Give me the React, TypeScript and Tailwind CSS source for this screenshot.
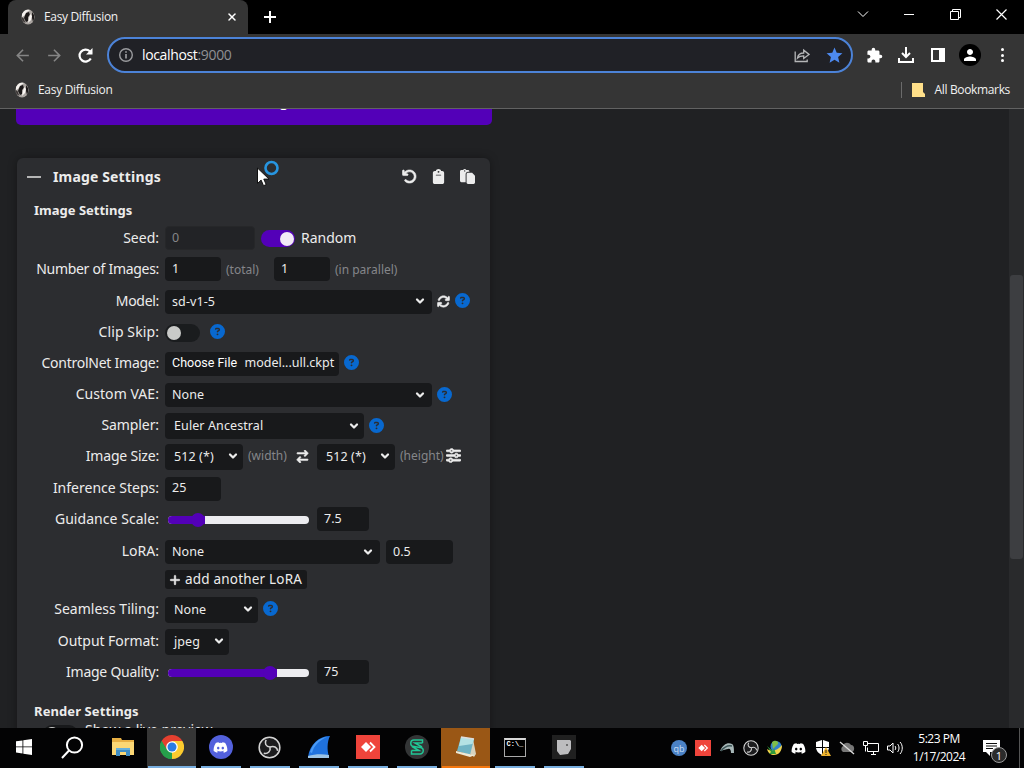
import type { ReactNode } from "react";
import {
  FaArrowRightArrowLeft,
  FaArrowRotateLeft,
  FaArrowsRotate,
  FaCircleQuestion,
  FaClipboard,
  FaDiscord,
  FaPaste,
  FaPlus,
  FaSliders,
} from "react-icons/fa6";
import { MdArrowBack, MdArrowForward, MdExtension, MdPerson, MdStar } from "react-icons/md";
import { ChevronDown, X } from "lucide-react";

function Favicon() {
  return (
    <svg width="16" height="16" viewBox="0 0 16 16">
      <ellipse cx="8" cy="8" rx="6.5" ry="7.500" fill="#aaa5a1" />
      <path d="M2 5C4 1 7 0 10 1l-3 2-3 4-2 1z" fill="#f4f1ee" />
      <path d="M6 4l3-1 1 3-2 2 0 4-2 1-2-4z" fill="#1b1818" />
      <path d="M10 5l2 2-1 4-3 3 1-5z" fill="#fbf8f4" />
      <path d="M1.500 8l2 1 2 5-3-2z" fill="#3b3635" />
      <path d="M12 3l2 3 0 4-1 3-1-4z" fill="#1d1a1a" />
    </svg>
  );
}

function TabStrip() {
  return (
    <div className="flex h-[34px] bg-black pl-2">
      <div className="flex w-60 items-center rounded-t-lg bg-[#353535] pl-3">
        <Favicon />
        <span className="ml-2 flex-1 text-xs tracking-[-0.35px] text-[#f1f1f1]">Easy Diffusion</span>
        <X size={12} strokeWidth={3} className="mr-2.5 text-white" />
      </div>
      <svg className="ml-4 mt-[11px]" width="12" height="12" viewBox="0 0 12 12">
        <path d="M6 0v12M0 6h12" stroke="#fff" strokeWidth="2" />
      </svg>
      <div className="ml-auto flex h-7 items-center text-white">
        <div className="flex w-[46px] justify-center">
          <svg width="12" height="12" viewBox="0 0 12 12" fill="none" stroke="currentColor">
            <path d="M1 3.5l5 5 5-5" />
          </svg>
        </div>
        <div className="flex w-[46px] justify-center">
          <div className="h-px w-2.5 bg-white" />
        </div>
        <div className="flex w-[46px] justify-center">
          <svg width="11" height="11" viewBox="0 0 11 11" fill="none" stroke="currentColor">
            <path d="M.5 2.5h8v8h-8zM2.5 2.5v-2h8v8h-2" />
          </svg>
        </div>
        <div className="flex w-[46px] justify-center">
          <svg width="11" height="11" viewBox="0 0 11 11" stroke="currentColor" strokeWidth="1.2">
            <path d="M.5.5l10 10M10.5.5l-10 10" />
          </svg>
        </div>
      </div>
    </div>
  );
}

function AddressBar() {
  return (
    <div className="flex h-[42px] items-center bg-[#353535] pl-[13px] text-white">
      <MdArrowBack size={19} className="text-[#858585]" />
      <MdArrowForward size={19} className="ml-[13px] text-[#858585]" />
      <svg className="ml-[13px] mr-0.5" width="17" height="17" viewBox="0 0 17 17" fill="none">
        <path d="M13.800 11.500A6 6 0 1 1 12.800 4.300L14.500 6" stroke="#fff" strokeWidth="2.200" />
        <path d="M15.500 1v6.500H9z" fill="#fff" />
      </svg>
      <div className="ml-[11px] flex h-9 w-[746px] items-center rounded-full border-2 border-[#4c83d8] bg-[#202126] pl-[9px]">
        <svg width="16" height="16" viewBox="0 0 16 16" fill="none" stroke="#9a9b9e" strokeWidth="1.4">
          <circle cx="8" cy="8" r="6.3" />
          <path d="M8 7v4.5M8 4.3v1.4" strokeWidth="1.7" />
        </svg>
        <span className="ml-2 flex-1 text-sm tracking-[-0.35px] text-white">
          localhost<span className="text-[#8f9094]">:9000</span>
        </span>
        <svg width="16" height="16" viewBox="0 0 16 16" fill="none" stroke="#b5b6b8" strokeWidth="1.3">
          <path d="M1.2 4.5v10h12v-2" />
          <path d="M3.5 11c.6-3.5 3-5 6.2-5V3.2L15 7.4l-5.300 4V8.800c-2.500 0-4.500.4-6.200 2.200z" />
        </svg>
        <MdStar size={19} className="ml-[15px] mr-[7px] text-[#4d8af0]" />
      </div>
      <MdExtension size={17} className="ml-[13px]" />
      <svg className="ml-[15px]" width="16" height="16" viewBox="0 0 16 16" fill="none" stroke="currentColor" strokeWidth="2">
        <path d="M8 0v9.500M4 6l4 4 4-4M1 11v4h14v-4" />
      </svg>
      <svg className="ml-[17px]" width="14" height="14" viewBox="0 0 14 14">
        <path d="M0 0h14v14H0zM2 2v10h6V2z" fill="#fff" fillRule="evenodd" />
      </svg>
      <div className="ml-3.5 flex size-[22px] items-center justify-center rounded-full bg-black">
        <MdPerson size={18} />
      </div>
      <div className="ml-5 flex flex-col gap-[2.500px]">
        <div className="size-[3px] rounded-full bg-white" />
        <div className="size-[3px] rounded-full bg-white" />
        <div className="size-[3px] rounded-full bg-white" />
      </div>
    </div>
  );
}

function BookmarksBar() {
  return (
    <div className="flex h-[33px] items-center border-b border-[#626262] bg-[#353535] pb-1 pl-3.5 text-xs tracking-[-0.3px] text-[#f1f1f1]">
      <Favicon />
      <span className="ml-2">Easy Diffusion</span>
      <div className="ml-auto h-4 w-px bg-[#6b6b6b]" />
      <svg className="ml-2.5" width="13" height="14" viewBox="0 0 13 14">
        <path d="M0 0h11v9l2 2v3H0z" fill="#ffe08a" />
      </svg>
      <span className="ml-2.5 mr-3.5 tracking-[-0.35px]">All Bookmarks</span>
    </div>
  );
}

function Help({ className = "ml-[5px]" }: { className?: string }) {
  return <FaCircleQuestion size={15} className={`mb-px shrink-0 text-[#0868cf] ${className}`} />;
}

function Row({
  label,
  height,
  tracking = "",
  children,
}: {
  label: string;
  height: string;
  tracking?: string;
  children: ReactNode;
}) {
  return (
    <div className={`flex items-center ${height}`}>
      <div className={`mr-1.5 w-[142px] shrink-0 whitespace-nowrap pb-px text-right text-sm ${tracking}`}>
        {label}
      </div>
      {children}
    </div>
  );
}

function Field({ value, className }: { value: string; className: string }) {
  return (
    <div
      className={`flex h-6 shrink-0 items-center rounded-[4px] bg-[#18191b] pl-[7px] text-[12.5px] ${className}`}
    >
      {value}
    </div>
  );
}

function Select({
  value,
  className,
}: {
  value: string;
  className: string;
}) {
  return (
    <div
      className={`mt-px flex shrink-0 items-center justify-between whitespace-nowrap rounded-[4px] bg-[#18191b] text-[12.5px] tracking-[0.1px] ${className}`}
    >
      <span className="pt-px">{value}</span>
      <ChevronDown size={12} strokeWidth={4.500} className="mb-px" />
    </div>
  );
}

function Slider({ fill }: { fill: string }) {
  return (
    <div className="ml-[3px] mt-px flex h-2 w-[141px] shrink-0 items-center rounded-full bg-[#ededf0]">
      <div className={`h-2 rounded-l-full bg-[#5300b8] ${fill}`} />
      <div className="-ml-3.5 size-3.5 rounded-full bg-[#5300b8]" />
    </div>
  );
}

function ImageSettings() {
  return (
    <div className="ml-[17px] mt-[33px] h-[640px] w-[473px] rounded-[6px] bg-[#2c2d30] text-[#ececec] shadow-[0_0_8px_rgba(0,0,0,0.35)]">
      <div className="flex h-[37px] items-center pl-2.5">
        <div className="h-0.5 w-3.5 bg-[#b5b5b5]" />
        <h4 className="ml-3 text-sm font-bold tracking-[0.15px]">Image Settings</h4>
        <FaArrowRotateLeft size={15} className="ml-auto stroke-current [stroke-width:20px]" />
        <FaClipboard size={15} className="ml-3.5" />
        <FaPaste size={15} className="ml-3.5 mr-[15px]" />
      </div>
      <div className="flex h-[27px] items-center pl-[17px] pt-[5px] text-[13px] font-bold">Image Settings</div>
      <Row label="Seed:" height="h-8">
        <div className="flex h-6 w-[90px] items-center rounded-[4px] border border-[#262729] bg-[#222326] pl-1.5 text-[12.5px] text-[#858688]">
          0
        </div>
        <div className="ml-1.5 mt-px flex h-[17px] w-[34px] items-center justify-end rounded-full bg-[#5300b8] pr-px">
          <div className="size-3.5 rounded-full bg-[#f2e9f6]" />
        </div>
        <span className="ml-1.5 text-sm">Random</span>
      </Row>
      <Row label="Number of Images:" height="h-[31px]" tracking="tracking-[-0.3px]">
        <Field value="1" className="mb-px w-14" />
        <span className="ml-[5px] w-12 text-xs text-[#85868a]">(total)</span>
        <Field value="1" className="mb-px w-14" />
        <span className="ml-[5px] text-xs text-[#85868a]">(in parallel)</span>
      </Row>
      <Row label="Model:" height="h-8" tracking="tracking-[-0.3px]">
        <Select value="sd-v1-5" className="h-6 w-[267px] pl-[7px] pr-1.5" />
        <FaArrowsRotate size={13} className="ml-[5px] stroke-current [stroke-width:20px]" />
        <Help />
      </Row>
      <Row label="Clip Skip:" height="h-[30px]" tracking="tracking-[0.1px]">
        <div className="mt-0.5 flex h-[18px] w-[35px] items-center rounded-full bg-[#1a1c1e] pl-0.5">
          <div className="size-3.5 rounded-full bg-[#c9cac8]" />
        </div>
        <Help className="ml-2.5" />
      </Row>
      <Row label="ControlNet Image:" height="h-8" tracking="tracking-[-0.25px]">
        <div className="mt-px flex h-6 w-[174px] items-center whitespace-nowrap rounded-[4px] bg-[#18191b] pl-[7px] text-[12.5px]">
          <span className="w-[72.500px] font-['Roboto',sans-serif] text-[12.5px] text-white">Choose File</span>
          model...ull.ckpt
        </div>
        <Help />
      </Row>
      <Row label="Custom VAE:" height="h-[31px]" tracking="tracking-[0.05px]">
        <Select value="None" className="h-6 w-[267px] pl-[7px] pr-1.5" />
        <Help />
      </Row>
      <Row label="Sampler:" height="h-[31px]" tracking="tracking-[-0.1px]">
        <Select value="Euler Ancestral" className="h-[26px] w-[199px] pl-[9px] pr-1" />
        <Help />
      </Row>
      <Row label="Image Size:" height="h-[30px]" tracking="tracking-[-0.2px]">
        <Select value="512 (*)" className="h-[26px] w-[78px] pl-[9px] pr-1" />
        <span className="ml-[5px] w-12 text-xs text-[#85868a]">(width)</span>
        <FaArrowRightArrowLeft size={13} className="stroke-current [stroke-width:20px]" />
        <Select value="512 (*)" className="ml-2 h-[26px] w-[78px] pl-[9px] pr-1" />
        <span className="ml-[5px] w-[46px] text-xs text-[#85868a]">(height)</span>
        <FaSliders size={15} className="mb-0.5 stroke-current [stroke-width:20px]" />
      </Row>
      <Row label="Inference Steps:" height="h-[34px]">
        <Field value="25" className="mt-px w-14" />
      </Row>
      <Row label="Guidance Scale:" height="h-7" tracking="tracking-[0.05px]">
        <Slider fill="w-[37px]" />
        <Field value="7.5" className="ml-2 w-[52px]" />
      </Row>
      <Row label="LoRA:" height="h-[37px]">
        <Select value="None" className="h-6 w-[215px] pl-[7px] pr-1.5" />
        <Field value="0.5" className="ml-1.5 mt-px w-[67px]" />
      </Row>
      <div className="ml-[148px] flex h-[19px] w-[142px] items-center rounded-[3px] bg-[#18191b] pl-1 text-[13.500px] tracking-[0.2px]">
        <FaPlus size={12} className="mr-1 stroke-current [stroke-width:24px]" />
        <span className="whitespace-nowrap">add another LoRA</span>
      </div>
      <Row label="Seamless Tiling:" height="h-10">
        <Select value="None" className="h-[26px] w-[93px] pl-[9px] pr-1" />
        <Help />
      </Row>
      <Row label="Output Format:" height="h-6" tracking="tracking-[-0.05px]">
        <Select value="jpeg" className="h-[26px] w-16 pl-[9px] pr-1" />
      </Row>
      <Row label="Image Quality:" height="h-[38px]" tracking="tracking-[-0.25px]">
        <Slider fill="w-[109px]" />
        <Field value="75" className="ml-2 w-[52px]" />
      </Row>
      <div className="flex h-[41px] items-center pl-[17px] text-[13px] font-bold tracking-[0.1px]">
        Render Settings
      </div>
      <div className="-mt-2 flex items-start pl-[26px]">
        <div className="mt-px h-[18px] w-[35px] rounded-full bg-[#18191b] pl-0.5 pt-0.5">
          <div className="size-3.5 rounded-full bg-[#c9cac8]" />
        </div>
        <span className="-mt-1 ml-[7px] text-sm">Show a live preview</span>
      </div>
    </div>
  );
}

function Page() {
  return (
    <div className="flex h-[619px] overflow-hidden bg-[#202123]">
      <div className="flex-1 font-['Noto_Sans',sans-serif]">
        <div className="-mt-8 ml-4 flex h-12 w-[476px] items-center justify-center rounded-[5px] bg-[#5300b8] pt-0.5 text-sm font-semibold text-white">
          Make Image
        </div>
        <ImageSettings />
      </div>
      <div className="w-[15px] bg-[#292a2c] pt-[166px]">
        <div className="mx-auto h-[284px] w-[13px] rounded-[3px] bg-[#3d3e41]" />
      </div>
    </div>
  );
}

function ObsIcon({ size }: { size: number }) {
  return (
    <svg width={size} height={size} viewBox="0 0 24 24" fill="none" stroke="#d4d4d4" strokeWidth="1.600">
      <circle cx="12" cy="12" r="10.800" fill="#1c1c1e" />
      <path d="M12.500 11.500C8 11 6.500 7.500 8.500 4M12.500 11.500c4-1.500 7.500 0 8 4M12.500 11.500c1 4-2 7.500-6.500 6.500" />
    </svg>
  );
}

function AnydeskIcon({ className }: { className: string }) {
  return (
    <svg className={className} viewBox="0 0 24 24">
      <path d="M0 0h24v24H0z" fill="#ef443b" />
      <path d="M10 7l5 5-5 5-5-5z" fill="#fff" />
      <path d="M14 7.500l4.500 4.500-4.500 4.500" fill="none" stroke="#fff" strokeWidth="1.800" />
    </svg>
  );
}

function Task({
  children,
  bg = "",
  bar = "",
}: {
  children: ReactNode;
  bg?: string;
  bar?: string;
}) {
  return (
    <div className={`flex h-full w-[49px] flex-col items-center ${bg}`}>
      <div className="flex flex-1 items-center justify-center">{children}</div>
      <div className={`h-0.5 ${bar}`} />
    </div>
  );
}

function Taskbar() {
  return (
    <div className="flex h-10 bg-[#030304]">
      <Task>
        <svg className="mr-0.5" width="16" height="16" viewBox="0 0 16 16" fill="#fff">
          <path d="M0 2.300L6.500 1.400v6.100H0zM7.300 1.300L16 0v7.500H7.300zM0 8.300h6.500v6.200L0 13.600zM7.300 8.300H16V16l-8.700-1.300z" />
        </svg>
      </Task>
      <Task>
        <svg className="mr-[3px]" width="23" height="23" viewBox="0 0 23 23" fill="none" stroke="#fff" strokeWidth="2">
          <circle cx="13.500" cy="9" r="7.600" />
          <path d="M8 14.500L1 22" />
        </svg>
      </Task>
      <Task>
        <svg width="22" height="19" viewBox="0 0 22 19">
          <path d="M0 0h9l1 2h12v15H0z" fill="#e8b044" />
          <path d="M0 4h22v13H0z" fill="#fbd775" />
          <path d="M4 10h14v8h-4v-4H8v4H4z" fill="#3f8dc4" />
          <path d="M4 10h14v2H4z" fill="#66b0dc" />
        </svg>
      </Task>
      <Task bg="bg-[#363636]" bar="w-12 bg-[#78aedf]">
        <svg width="24" height="24" viewBox="0 0 24 24">
          <path d="M12 12L1.600 6A12 12 0 0 1 22.400 6z" fill="#e4402f" />
          <path d="M12 12L22.400 6A12 12 0 0 1 12 24z" fill="#fccb2e" />
          <path d="M12 12V24A12 12 0 0 1 1.600 6z" fill="#26a04b" />
          <path d="M12 6h10.400L17 15l-5 9 3-9z" fill="#fccb2e" />
          <path d="M1.600 6L7 15l5-9z" fill="#e4402f" />
          <path d="M1.600 6l5.200 9 5.200 3V24A12 12 0 0 1 1.600 6z" fill="#26a04b" />
          <circle cx="12" cy="12" r="5.800" fill="#fff" />
          <circle cx="12" cy="12" r="4.500" fill="#2a7ce4" />
        </svg>
      </Task>
      <Task bar="w-10 bg-[#78aedf]">
        <div className="flex size-6 items-center justify-center rounded-full bg-[#5361dc] text-white">
          <FaDiscord size={15} />
        </div>
      </Task>
      <Task bar="w-10 bg-[#78aedf]">
        <ObsIcon size={23} />
      </Task>
      <Task bar="w-10 bg-[#78aedf]">
        <svg width="24" height="24" viewBox="0 0 24 24">
          <path d="M1 22C3 9 12 1 23 1c-3 6-3 14-1 21z" fill="#1f72de" />
          <path d="M3 17C6 8 12 3 20 2 11 6 7 11 5 18z" fill="#4b9bf5" />
          <path d="M1 21c7-2 14-2 21-1v3H1z" fill="#9cc3e4" />
        </svg>
      </Task>
      <Task bar="w-10 bg-[#78aedf]">
        <AnydeskIcon className="size-6" />
      </Task>
      <Task bar="w-10 bg-[#78aedf]">
        <svg width="24" height="24" viewBox="0 0 24 24" fill="none" stroke="#20c896" strokeWidth="1.500">
          <circle cx="12" cy="12" r="12" fill="#333536" stroke="none" />
          <path d="M17.500 8V5H9a3 3 0 0 0 0 6.500l6 1a3.200 3.200 0 0 1 0 6.500H6.500v-3.500M17.500 8H10l7 4M6.500 15.500H14l-7-4" />
        </svg>
      </Task>
      <Task bg="bg-[#9a5715]" bar="w-12 bg-[#f5780f]">
        <svg width="24" height="24" viewBox="0 0 24 24">
          <path d="M19 4l3 15-2 3-5-4z" fill="#d7d2bd" />
          <path d="M7 2l13 2-4 16-13-4z" fill="#6fb4c4" />
          <path d="M7 2l13 2-1.500 5-13.500 2z" fill="#b3e2e4" />
          <path d="M2 16l13 3 6 1-5 2-14-4z" fill="#eee9d6" />
          <path d="M7 2l13 2" stroke="#ddd" strokeWidth="1.500" />
        </svg>
      </Task>
      <Task bar="w-10 bg-[#78aedf]">
        <div className="h-[19px] w-[22px] border border-[#a9a9a9] border-t-2 border-t-[#d6d6d6] bg-black pl-0.5 font-['Liberation_Mono',monospace] text-[7px] font-bold leading-[9px] text-white">
          C:\_
        </div>
      </Task>
      <Task bar="w-10 bg-[#78aedf]">
        <div className="flex size-6 items-center justify-center bg-[#202020]">
          <svg width="15" height="15" viewBox="0 0 15 15">
            <path d="M1 0h13l1 1v8l-3 5-8 1-3-4V1z" fill="#bdbdbf" />
            <circle cx="11" cy="5" r="1" fill="#555" />
          </svg>
        </div>
      </Task>
      <Tray />
    </div>
  );
}

function Tray() {
  return (
    <div className="ml-auto flex items-center text-white">
      <div className="flex items-center gap-2">
        <div className="flex size-4 items-center justify-center rounded-full bg-[#4b82c6] text-[9px] leading-none text-[#c6def4]">
          qb
        </div>
        <AnydeskIcon className="size-4" />
        <svg width="16" height="16" viewBox="0 0 16 16">
          <path d="M1 11C4 4 9 2 13 4c2 1 2 5 2 9h-3c0-3-1-5-3-4-2 0-4 1-8 2z" fill="#a7b7b8" />
          <path d="M2 11c4-5 7-6 11-5" fill="none" stroke="#3c5456" strokeWidth="1.500" />
        </svg>
        <ObsIcon size={16} />
        <svg width="16" height="16" viewBox="0 0 16 16">
          <circle cx="9" cy="6.500" r="5.500" fill="#3280c8" />
          <path d="M5 2c4-3 7 0 6 2L6 9z" fill="#7fbd49" />
          <path d="M0 9c5 3 10 2 15-4 0 6-3 10-8 10-3 0-6-2-7-6z" fill="#efd34b" />
          <path d="M0 6l6 5 1-3 2 6-7 0 2-2z" fill="#2e9b3b" />
        </svg>
        <FaDiscord size={15} className="mr-px" />
        <svg width="16" height="16" viewBox="0 0 16 16">
          <path d="M7 0v7H1V2zM8 0l6 2v5H8zM1 8h6v7C3 13 1.500 11 1 8zM8 8h6c-.5 3-2 5-6 7z" fill="#fff" />
          <path d="M11 7l5 9H6z" fill="#efb42d" />
          <path d="M11 10v3M11 14v1" stroke="#222" />
        </svg>
        <svg width="16" height="16" viewBox="0 0 16 16">
          <path d="M4 12a3.500 3.500 0 0 1 0-6c1-4 6-4 8-1 4 0 4 6 1 7z" fill="#777" />
          <path d="M1 2l14 12" stroke="#ddd" strokeWidth="1.300" />
        </svg>
        <svg width="16" height="16" viewBox="0 0 16 16" fill="none" stroke="#fff">
          <path d="M4.500 3.500h11v8h-11v-4M8 14.500h5M10.500 11.500v3M.5 1.500h4v4h-4zM2.500 5.500v6" />
        </svg>
        <svg width="16" height="16" viewBox="0 0 16 16" fill="none" stroke="#fff">
          <path d="M.5 6h2.500l3-3v10l-3-3H.5zM8 6c1 1 1 3 0 4M10.500 4c2 2 2 6 0 8M13 2c3 3 3 9 0 12" />
        </svg>
      </div>
      <div className="ml-1.5 w-[60px] text-center text-xs leading-[18px] tracking-[-0.5px]">
        <div>5:23 PM</div>
        <div>1/17/2024</div>
      </div>
      <div className="relative ml-3.5 mr-3 mt-2 size-6">
        <svg width="17" height="17" viewBox="0 0 17 17">
          <path d="M0 0h17v12H7v4l-4-4H0z" fill="#fff" />
          <path d="M3 3.500h11M3 6h11M3 8.500h7" stroke="#111" />
        </svg>
        <div className="absolute left-2 top-[7px] flex size-4 items-center justify-center rounded-full border border-[#9a9a9a] bg-[#2b2b2b] text-[11px] leading-none">
          1
        </div>
      </div>
      <div className="mr-1 h-10 w-px bg-[#555]" />
    </div>
  );
}

function Cursor() {
  return (
    <svg className="absolute left-[256px] top-40" width="24" height="28" viewBox="0 0 24 28">
      <path d="M1.500 8v15.500l3.600-3.400 2.400 5.600 2.700-1.100-2.400-5.500h5.200z" fill="#fff" stroke="#111" />
      <circle cx="15.500" cy="8" r="6" fill="none" stroke="#2795e0" strokeWidth="2.600" />
    </svg>
  );
}

export default function App() {
  return (
    <div className="relative h-[768px] w-[1024px] overflow-hidden font-['Open_Sans',sans-serif]">
      <TabStrip />
      <AddressBar />
      <BookmarksBar />
      <Page />
      <Taskbar />
      <Cursor />
    </div>
  );
}
